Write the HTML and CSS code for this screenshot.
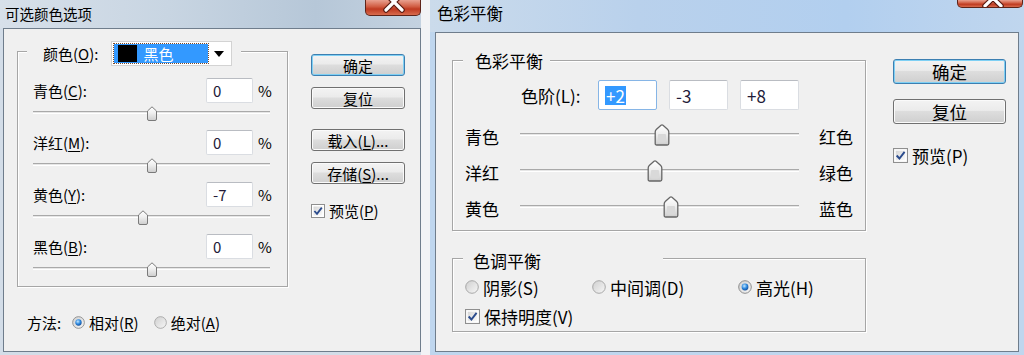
FILE: index.html
```html
<!DOCTYPE html>
<html lang="zh-CN">
<head>
    <meta charset="UTF-8">
    <title>可选颜色 / 色彩平衡</title>
    <link rel="stylesheet" href="styles.css">
</head>
<body>
    <svg class="svg-defs" width="0" height="0" aria-hidden="true">
        <defs>
            <linearGradient id="radio-fill" x1="0" y1="0" x2="1" y2="1">
                <stop offset="0" stop-color="#cfcfcf"/>
                <stop offset="1" stop-color="#f7f7f7"/>
            </linearGradient>
            <radialGradient id="radio-dot" cx=".4" cy=".35" r=".75">
                <stop offset="0" stop-color="#c4e8ff"/>
                <stop offset=".5" stop-color="#2f8ae0"/>
                <stop offset="1" stop-color="#0c3f8a"/>
            </radialGradient>
            <linearGradient id="box-fill" x1="0" y1="0" x2="1" y2="1">
                <stop offset="0" stop-color="#d6d6d6"/>
                <stop offset="1" stop-color="#fbfbfb"/>
            </linearGradient>
            <linearGradient id="thumb-fill" x1="0" y1="0" x2="0" y2="1">
                <stop offset="0" stop-color="#ffffff"/>
                <stop offset=".45" stop-color="#efefef"/>
                <stop offset="1" stop-color="#cdcdcd"/>
            </linearGradient>
        </defs>
    </svg>

    <!-- 可选颜色 -->
    <div class="win win-selective">
        <div class="titlebar">
            <span class="title">可选颜色选项</span>
            <span class="close">
                <svg width="56" height="15" viewBox="0 0 56 15">
                    <path d="M20 -6 L36 10 M36 -6 L20 10" stroke="#5a1a10" stroke-width="5.5" stroke-linecap="round"/>
                    <path d="M20 -6 L36 10 M36 -6 L20 10" stroke="#fff" stroke-width="3.2" stroke-linecap="round"/>
                </svg>
            </span>
        </div>
        <div class="client">
            <div class="main">
                <div class="group">
                    <div class="legend">
                        <span>颜色(<u>O</u>):</span>
                        <div class="select">
                            <div class="select-value"><span class="swatch"></span>黑色</div>
                            <svg class="select-arrow" width="10" height="6" viewBox="0 0 10 6"><path d="M0 0 H10 L5 6 Z" fill="#000"/></svg>
                        </div>
                    </div>

                    <div class="field">
                        <span class="field-label">青色(<u>C</u>):</span>
                        <span class="box">0</span>
                        <span class="unit">%</span>
                    </div>
                    <div class="slider">
                        <div class="track">
                            <span class="thumb" style="left: 50%">
                                <svg width="11" height="15" viewBox="0 0 11 15"><path d="M1 5 L5.5 .8 L10 5 V13 Q10 14.5 8.5 14.5 H2.5 Q1 14.5 1 13 Z" fill="url(#thumb-fill)" stroke="#7a7a7a"/></svg>
                            </span>
                        </div>
                    </div>

                    <div class="field">
                        <span class="field-label">洋红(<u>M</u>):</span>
                        <span class="box">0</span>
                        <span class="unit">%</span>
                    </div>
                    <div class="slider">
                        <div class="track">
                            <span class="thumb" style="left: 50%">
                                <svg width="11" height="15" viewBox="0 0 11 15"><path d="M1 5 L5.5 .8 L10 5 V13 Q10 14.5 8.5 14.5 H2.5 Q1 14.5 1 13 Z" fill="url(#thumb-fill)" stroke="#7a7a7a"/></svg>
                            </span>
                        </div>
                    </div>

                    <div class="field">
                        <span class="field-label">黄色(<u>Y</u>):</span>
                        <span class="box">-7</span>
                        <span class="unit">%</span>
                    </div>
                    <div class="slider">
                        <div class="track">
                            <span class="thumb" style="left: 46.5%">
                                <svg width="11" height="15" viewBox="0 0 11 15"><path d="M1 5 L5.5 .8 L10 5 V13 Q10 14.5 8.5 14.5 H2.5 Q1 14.5 1 13 Z" fill="url(#thumb-fill)" stroke="#7a7a7a"/></svg>
                            </span>
                        </div>
                    </div>

                    <div class="field">
                        <span class="field-label">黑色(<u>B</u>):</span>
                        <span class="box">0</span>
                        <span class="unit">%</span>
                    </div>
                    <div class="slider">
                        <div class="track">
                            <span class="thumb" style="left: 50%">
                                <svg width="11" height="15" viewBox="0 0 11 15"><path d="M1 5 L5.5 .8 L10 5 V13 Q10 14.5 8.5 14.5 H2.5 Q1 14.5 1 13 Z" fill="url(#thumb-fill)" stroke="#7a7a7a"/></svg>
                            </span>
                        </div>
                    </div>
                </div>

                <div class="method">
                    <span class="method-label">方法:</span>
                    <span class="option">
                        <svg class="radio" viewBox="0 0 14 14"><circle cx="7" cy="7" r="6.3" fill="url(#radio-fill)" stroke="#8c8c8c"/><circle cx="7" cy="7" r="3.4" fill="url(#radio-dot)"/></svg>
                        相对(<u>R</u>)
                    </span>
                    <span class="option">
                        <svg class="radio" viewBox="0 0 14 14"><circle cx="7" cy="7" r="6.3" fill="url(#radio-fill)" stroke="#a8a8a8"/></svg>
                        绝对(<u>A</u>)
                    </span>
                </div>
            </div>

            <div class="side">
                <button class="btn btn-default">确定</button>
                <button class="btn">复位</button>
                <button class="btn btn-gap">载入(<u>L</u>)...</button>
                <button class="btn">存储(<u>S</u>)...</button>
                <span class="checkline">
                    <svg class="check" viewBox="0 0 14 14"><rect x=".5" y=".5" width="13" height="13" fill="#fff" stroke="#8f8f8f"/><rect x="2.5" y="2.5" width="9" height="9" fill="url(#box-fill)"/><path d="M3.4 7 L6 9.8 L10.8 3.6" fill="none" stroke="#2a4b8d" stroke-width="1.8"/></svg>
                    预览(<u>P</u>)
                </span>
            </div>
        </div>
    </div>

    <!-- 色彩平衡 -->
    <div class="win win-balance">
        <div class="titlebar">
            <span class="title">色彩平衡</span>
            <span class="close">
                <svg width="66" height="7" viewBox="0 0 66 7">
                    <path d="M27 -10 L43 6 M43 -10 L27 6" stroke="#5a1a10" stroke-width="5.5" stroke-linecap="round"/>
                    <path d="M27 -10 L43 6 M43 -10 L27 6" stroke="#fff" stroke-width="3.2" stroke-linecap="round"/>
                </svg>
            </span>
        </div>
        <div class="client">
            <div class="main">
                <div class="group">
                    <div class="legend">色彩平衡</div>
                    <div class="levels">
                        <span class="levels-label">色阶(L):</span>
                        <span class="box box-focus"><span class="sel">+2</span></span>
                        <span class="box">-3</span>
                        <span class="box">+8</span>
                    </div>

                    <div class="balance-row">
                        <span class="side-label">青色</span>
                        <div class="track">
                            <span class="thumb" style="left: 51%">
                                <svg width="16" height="22" viewBox="0 0 16 22"><path d="M1.2 8 Q1.2 6.5 2.5 5.3 L7 1.3 Q8 .6 9 1.3 L13.5 5.3 Q14.8 6.5 14.8 8 V19.5 Q14.8 21 13.3 21 H2.7 Q1.2 21 1.2 19.5 Z" fill="url(#thumb-fill)" stroke="#666" stroke-width="1.3"/><rect x="4" y="10" width="8" height="8.5" rx="1" fill="#d9d9d9"/></svg>
                            </span>
                        </div>
                        <span class="side-label">红色</span>
                    </div>
                    <div class="balance-row">
                        <span class="side-label">洋红</span>
                        <div class="track">
                            <span class="thumb" style="left: 48.5%">
                                <svg width="16" height="22" viewBox="0 0 16 22"><path d="M1.2 8 Q1.2 6.5 2.5 5.3 L7 1.3 Q8 .6 9 1.3 L13.5 5.3 Q14.8 6.5 14.8 8 V19.5 Q14.8 21 13.3 21 H2.7 Q1.2 21 1.2 19.5 Z" fill="url(#thumb-fill)" stroke="#666" stroke-width="1.3"/><rect x="4" y="10" width="8" height="8.5" rx="1" fill="#d9d9d9"/></svg>
                            </span>
                        </div>
                        <span class="side-label">绿色</span>
                    </div>
                    <div class="balance-row">
                        <span class="side-label">黄色</span>
                        <div class="track">
                            <span class="thumb" style="left: 54%">
                                <svg width="16" height="22" viewBox="0 0 16 22"><path d="M1.2 8 Q1.2 6.5 2.5 5.3 L7 1.3 Q8 .6 9 1.3 L13.5 5.3 Q14.8 6.5 14.8 8 V19.5 Q14.8 21 13.3 21 H2.7 Q1.2 21 1.2 19.5 Z" fill="url(#thumb-fill)" stroke="#666" stroke-width="1.3"/><rect x="4" y="10" width="8" height="8.5" rx="1" fill="#d9d9d9"/></svg>
                            </span>
                        </div>
                        <span class="side-label">蓝色</span>
                    </div>
                </div>

                <div class="group group-tone">
                    <div class="legend legend-wide">色调平衡</div>
                    <div class="tones">
                        <span class="option tone-shadow">
                            <svg class="radio" viewBox="0 0 14 14"><circle cx="7" cy="7" r="6.3" fill="url(#radio-fill)" stroke="#a8a8a8"/></svg>
                            阴影(S)
                        </span>
                        <span class="option tone-mid">
                            <svg class="radio" viewBox="0 0 14 14"><circle cx="7" cy="7" r="6.3" fill="url(#radio-fill)" stroke="#a8a8a8"/></svg>
                            中间调(D)
                        </span>
                        <span class="option">
                            <svg class="radio" viewBox="0 0 14 14"><circle cx="7" cy="7" r="6.3" fill="url(#radio-fill)" stroke="#8c8c8c"/><circle cx="7" cy="7" r="3.4" fill="url(#radio-dot)"/></svg>
                            高光(H)
                        </span>
                    </div>
                    <span class="checkline keep">
                        <svg class="check" viewBox="0 0 14 14"><rect x=".5" y=".5" width="13" height="13" fill="#fff" stroke="#8f8f8f"/><rect x="2.5" y="2.5" width="9" height="9" fill="url(#box-fill)"/><path d="M3.4 7 L6 9.8 L10.8 3.6" fill="none" stroke="#2a4b8d" stroke-width="1.8"/></svg>
                        保持明度(V)
                    </span>
                </div>
            </div>

            <div class="side">
                <button class="btn btn-default">确定</button>
                <button class="btn">复位</button>
                <span class="checkline">
                    <svg class="check" viewBox="0 0 14 14"><rect x=".5" y=".5" width="13" height="13" fill="#fff" stroke="#8f8f8f"/><rect x="2.5" y="2.5" width="9" height="9" fill="url(#box-fill)"/><path d="M3.4 7 L6 9.8 L10.8 3.6" fill="none" stroke="#2a4b8d" stroke-width="1.8"/></svg>
                    预览(P)
                </span>
            </div>
        </div>
    </div>
</body>
</html>
```

FILE: styles.css
```css
:root {
    --client-bg: #f0f0f0;
    --client-border: #6f7d8c;
    --group-line: #a6a6a6;
    --text: #000000;
}

* {
    box-sizing: border-box;
}

body {
    margin: 0;
    width: 1024px;
    height: 355px;
    overflow: hidden;
    display: flex;
    background: #f2f3f5;
    color: var(--text);
    font-family: "Noto Sans CJK SC", "Noto Sans", sans-serif;
    line-height: 1;
}

.svg-defs {
    position: absolute;
    width: 0;
    height: 0;
}

u {
    text-decoration-thickness: 1px;
    text-underline-offset: 2px;
}

/* 窗口框架 */
.win {
    display: flex;
    flex-direction: column;
    height: 355px;
}

.titlebar {
    display: flex;
    justify-content: space-between;
    align-items: flex-start;
    flex: none;
}

.close {
    display: block;
    overflow: hidden;
    border: 1px solid #5e2419;
    border-top: none;
    border-radius: 0 0 5px 5px;
    background: linear-gradient(#e9a190, #d05b41 45%, #bf3a21 60%, #d86b4d);
}

.close svg {
    display: block;
}

.client {
    flex: 1;
    display: flex;
    background: var(--client-bg);
    border: 1px solid var(--client-border);
}

/* 分组框 */
.group {
    border: 1px solid var(--group-line);
    box-shadow: 1px 1px 0 #fff, inset 1px 1px 0 #fff;
}

.legend {
    display: flex;
    align-items: center;
    width: fit-content;
    background: var(--client-bg);
}

.box {
    display: flex;
    align-items: center;
    flex: none;
    background: #fff;
    border: 1px solid #dadde2;
    border-top-color: #b9bcc2;
    border-radius: 2px;
    color: #231a38;
}

.track {
    position: relative;
    height: 3px;
    background: #e6e6e6;
    border-top: 1px solid #a9a9a9;
    border-bottom: 1px solid #ffffff;
}

.thumb {
    position: absolute;
    transform: translateX(-50%);
}

.thumb svg {
    display: block;
}

.option,
.checkline {
    display: inline-flex;
    align-items: center;
    white-space: nowrap;
}

.btn {
    display: flex;
    align-items: center;
    justify-content: center;
    padding: 0;
    font-family: inherit;
    color: var(--text);
    line-height: 1;
    border: 1px solid #707070;
    border-radius: 3px;
    background: linear-gradient(#f3f3f3, #ebebeb 45%, #dddddd 50%, #cfcfcf);
    box-shadow: inset 0 0 0 1px #fafafa;
}

.btn-default {
    border-color: #3c7fb1;
    box-shadow: inset 0 0 0 1px #7fd0f4;
}

/* 左侧：可选颜色 */
.win-selective {
    width: 421px;
    background: #d3dde8;
}

.win-selective .titlebar {
    height: 28px;
    background: linear-gradient(90deg, #d7e0ea, #c8d5e2 40%, #b6c7d8 75%, #c4d2e0);
}

.win-selective .title {
    margin: 6px 0 0 5px;
    font-size: 14.5px;
    line-height: 16px;
}

.win-selective .close {
    width: 56px;
    height: 16px;
}

.win-selective .client {
    margin: 0 0 3px 3px;
    padding-left: 13px;
    font-size: 15px;
}

.win-selective .group {
    width: 271px;
    margin-top: 22px;
    padding: 0 17px 0 15px;
}

.win-selective .legend {
    height: 25px;
    margin: -11px 0 0 -6px;
    padding: 0 9px 0 16px;
    gap: 13px;
}

.select {
    display: flex;
    align-items: center;
    width: 121px;
    height: 25px;
    padding: 2px;
    background: #fff;
    border: 1px solid #d3d3d3;
}

.select-value {
    display: flex;
    align-items: center;
    gap: 6px;
    width: 94px;
    height: 19px;
    padding-left: 4px;
    background: #3399ff;
    outline: 1px dotted #7a4a2a;
    color: #fff;
}

.swatch {
    width: 19px;
    height: 17px;
    background: #000;
}

.select-arrow {
    margin-left: auto;
    margin-right: 5px;
}

.field {
    display: flex;
    align-items: center;
    height: 25px;
    margin-top: 12px;
}

.field + .slider + .field {
    margin-top: 0;
}

.field-label {
    flex: 1;
}

.win-selective .box {
    width: 47px;
    height: 25px;
    padding-left: 6px;
}

.unit {
    width: 12px;
    margin-left: 5px;
}

.slider {
    height: 27px;
    padding-top: 8px;
}

.win-selective .thumb {
    top: -6px;
}

.method {
    display: flex;
    align-items: center;
    height: 20px;
    margin: 25px 0 0 10px;
}

.method-label {
    width: 45px;
}

.win-selective .radio {
    width: 13px;
    height: 13px;
    margin-right: 4px;
}

.method .option + .option {
    margin-left: 15px;
}

.win-selective .side {
    display: flex;
    flex-direction: column;
    width: 94px;
    margin: 25px 0 0 23px;
    gap: 11px;
}

.win-selective .btn {
    height: 22px;
    font-size: 15px;
}

.win-selective .btn-gap {
    margin-top: 9px;
}

.win-selective .checkline {
    margin-top: 8px;
}

.win-selective .check {
    width: 14px;
    height: 14px;
    margin-right: 4px;
}

/* 右侧：色彩平衡 */
.win-balance {
    flex: 1;
    margin-left: 9px;
    background: #bfd6ee;
}

.win-balance .titlebar {
    height: 32px;
    background: linear-gradient(90deg, #cbdbeb, #b9d1ec 35%, #b2cfef 70%, #c0d6ee);
}

.win-balance .title {
    margin: 5px 0 0 7px;
    font-size: 16.5px;
    line-height: 17px;
}

.win-balance .close {
    width: 66px;
    height: 8px;
    margin-right: 1px;
}

.win-balance .client {
    margin: 0 5px 3px 5px;
    font-size: 17px;
}

.win-balance .main {
    margin-left: 16px;
}

.win-balance .group {
    width: 414px;
    margin-top: 27px;
    padding: 0 11px 6px 12px;
}

.win-balance .legend {
    height: 22px;
    margin: -12px 0 0 -2px;
    padding: 0 7px 0 12px;
}

.win-balance .legend-wide {
    width: 200px;
    margin-top: -10px;
    padding-left: 10px;
}

.levels {
    display: flex;
    align-items: center;
    gap: 12px;
    margin: 9px 0 6px 56px;
}

.levels-label {
    width: 70px;
    margin-right: -5px;
}

.win-balance .box {
    width: 59px;
    height: 30px;
    padding-left: 6px;
}

.box-focus {
    border-color: #86b5e6;
}

.sel {
    padding: 1px 1px;
    background: #3399ff;
    color: #fff;
}

.balance-row {
    display: flex;
    align-items: center;
    height: 36px;
}

.side-label {
    width: 35px;
    padding-top: 4px;
}

.balance-row .track {
    flex: 1;
    margin: 0 20px 0 20px;
}

.win-balance .thumb {
    top: -10px;
}

.group-tone {
    margin-top: 27px;
}

.win-balance .group-tone {
    padding-bottom: 5px;
}

.tones {
    display: flex;
    align-items: center;
    height: 20px;
    margin-top: 6px;
}

.tone-shadow {
    width: 127px;
}

.tone-mid {
    width: 146px;
}

.win-balance .radio {
    width: 14px;
    height: 14px;
    margin-right: 4px;
}

.win-balance .check {
    width: 15px;
    height: 15px;
    margin-right: 4px;
}

.keep {
    height: 20px;
    margin-top: 9px;
}

.win-balance .side {
    display: flex;
    flex-direction: column;
    width: 113px;
    margin: 26px 0 0 27px;
    gap: 15px;
}

.win-balance .btn {
    height: 25px;
    font-size: 17.5px;
}

.win-balance .side .checkline {
    margin-top: 8px;
}
```
